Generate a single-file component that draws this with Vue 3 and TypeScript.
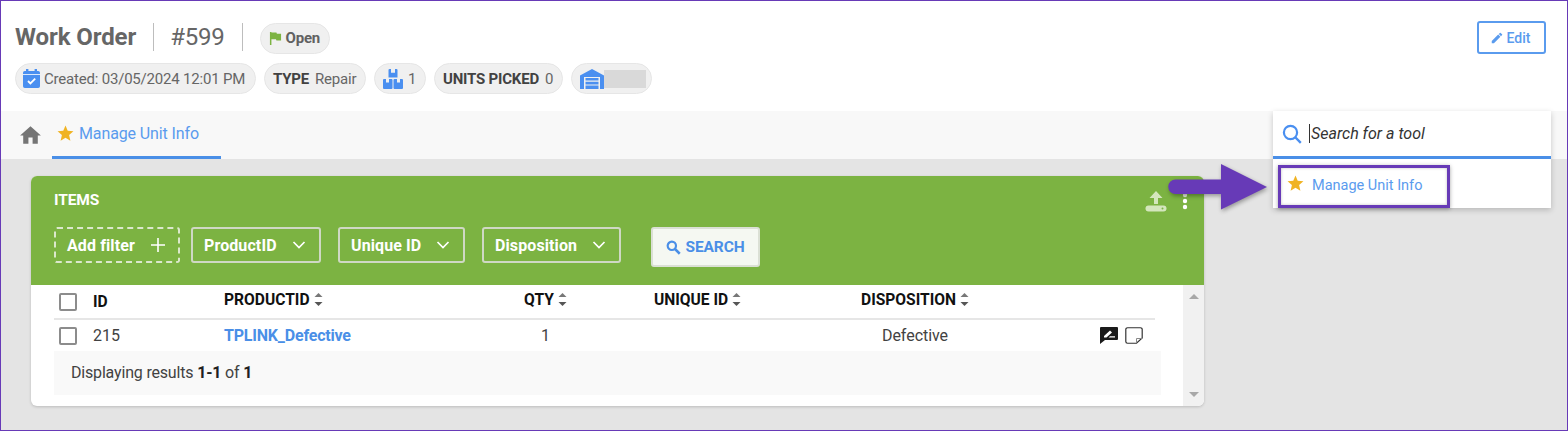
<script setup lang="ts">
const columns = [
  { label: 'PRODUCTID', cls: 'c-product' },
  { label: 'QTY', cls: 'c-qty' },
  { label: 'UNIQUE ID', cls: 'c-unique' },
  { label: 'DISPOSITION', cls: 'c-disp' },
]
const filters = [
  { label: 'ProductID', cls: 'f-product' },
  { label: 'Unique ID', cls: 'f-unique' },
  { label: 'Disposition', cls: 'f-disp' },
]
const starPath = 'M12 17.27 18.18 21l-1.64-7.03L22 9.24l-7.19-.61L12 2 9.19 8.63 2 9.24l5.46 4.73L5.82 21z'
</script>

<template>
  <div class="page">
    <header class="head">
      <div class="head-main">
        <div class="title-row">
          <h1 class="title">Work Order</h1>
          <span class="order-no">#599</span>
          <span class="chip status">
            <svg class="flag" viewBox="0 0 14 16" width="13" height="15"><path d="M1 1h1.600v14H1zM2.600 1.500H8l.5 1.300H13v7.400H8l-.5-1.300H2.600z" fill="#7cb342"/></svg>
            Open
          </span>
        </div>
        <div class="chip-row">
          <span class="chip c1">
            <svg viewBox="0 0 17 19" width="17" height="19"><path d="M3 0h2.400v2h6.200V0H14v2h1.200A1.800 1.800 0 0 1 17 3.800v13.400a1.800 1.800 0 0 1-1.800 1.800H1.800A1.800 1.800 0 0 1 0 17.200V3.800A1.800 1.800 0 0 1 1.800 2H3z" fill="#4a8ff0"/><path d="M0 5.200h17v.8H0z" fill="#fff"/><path d="m5 12 2.400 2.400L12.200 9.600" fill="none" stroke="#fff" stroke-width="1.800"/></svg>
            <span>Created: 03/05/2024 12:01 PM</span>
          </span>
          <span class="chip c2"><b>TYPE</b><span>Repair</span></span>
          <span class="chip c3">
            <svg viewBox="0 0 20 20" width="20" height="20"><path d="M5.500 1a1 1 0 0 1 1-1H8v3.800h4V0h1.500a1 1 0 0 1 1 1v7.500h-9zM0 11a1 1 0 0 1 1-1h2v3.500h3V10h2.500a1 1 0 0 1 1 1v8a1 1 0 0 1-1 1H1a1 1 0 0 1-1-1zM10.500 11a1 1 0 0 1 1-1H14v3.500h3V10h2a1 1 0 0 1 1 1v8a1 1 0 0 1-1 1h-7.500a1 1 0 0 1-1-1z" fill="#4a8ff0"/></svg>
            <span>1</span>
          </span>
          <span class="chip c4"><b>UNITS PICKED</b><span>0</span></span>
          <span class="chip c5">
            <svg viewBox="0 0 24 20" width="24" height="20"><path d="M0 6.500 12 0l12 6.500V20h-4V8H4v12H0z" fill="#4a8ff0"/><path d="M5.500 9h13v2.600h-13zM5.500 12.800h13v2.600h-13zM5.500 16.600h13V20h-13z" fill="#4a8ff0"/></svg>
            <span class="redacted"></span>
          </span>
        </div>
      </div>
      <button class="edit" type="button">
        <svg viewBox="0 0 24 24" width="14" height="14"><path d="M3 17.250V21h3.750L17.810 9.940l-3.750-3.750zM20.710 7.040a1 1 0 0 0 0-1.410l-2.340-2.340a1 1 0 0 0-1.410 0l-1.830 1.830 3.750 3.750z" fill="currentColor"/></svg>
        Edit
      </button>
    </header>

    <nav class="tabs">
      <svg class="home" viewBox="0 0 24 24" width="25" height="25"><path d="M10 20v-6h4v6h5v-8h3L12 3 2 12h3v8z" fill="#757575"/></svg>
      <a class="tab">
        <svg viewBox="0 0 24 24" width="19" height="19"><path :d="starPath" fill="#f0b323"/></svg>
        Manage Unit Info
      </a>
    </nav>

    <main class="content">
      <section class="card">
        <div class="card-head">
          <div class="card-title">ITEMS</div>
          <div class="filter-row">
            <button class="add-filter" type="button">
              Add filter
              <svg viewBox="0 0 16 16" width="16" height="16"><path d="M8 1v14M1 8h14" stroke="#fff" stroke-width="1.600" fill="none"/></svg>
            </button>
            <button v-for="f in filters" :key="f.label" class="filter" :class="f.cls" type="button">
              {{ f.label }}
              <svg viewBox="0 0 14 8" width="14" height="8"><path d="m1.500 1 5.500 5.500L12.500 1" stroke="#fff" stroke-width="1.700" fill="none"/></svg>
            </button>
            <button class="search" type="button">
              <svg viewBox="0 0 18 18" width="15" height="15"><circle cx="7" cy="7" r="5" fill="none" stroke="currentColor" stroke-width="2.600"/><path d="m10.500 10.500 6 6" stroke="currentColor" stroke-width="3"/></svg>
              SEARCH
            </button>
          </div>
          <div class="card-tools">
            <svg viewBox="0 0 24 24" width="24" height="24"><path d="M12 2 5.500 9H10v6h4V9h4.500z" fill="#d4e6bd"/><rect x="1.500" y="16.500" width="21" height="6" rx="3" fill="#d4e6bd"/><circle cx="18.500" cy="19.500" r="1" fill="#7cb342"/></svg>
            <svg viewBox="0 0 6 18" width="6" height="18"><circle cx="3" cy="3" r="2.200" fill="#e8f0dc"/><circle cx="3" cy="9" r="2.200" fill="#fff"/><circle cx="3" cy="15" r="2.200" fill="#fff"/></svg>
          </div>
        </div>

        <div class="card-body">
          <div class="table-wrap">
            <div class="grid-row head-row">
              <span class="check"></span>
              <span class="th th-id">ID</span>
              <span v-for="c in columns" :key="c.label" class="th" :class="c.cls">
                {{ c.label }}
                <svg viewBox="0 0 9 15" width="9" height="15"><path d="M4.500 1 8.500 5H.5z" fill="#777"/><path d="M.5 10h8l-4 4z" fill="#555"/></svg>
              </span>
              <span></span>
            </div>
            <div class="grid-row data-row">
              <span class="check"></span>
              <span>215</span>
              <a class="link">TPLINK_Defective</a>
              <span class="qty">1</span>
              <span></span>
              <span class="disp">Defective</span>
              <span class="actions">
                <svg viewBox="0 0 18 17" width="18" height="17"><path d="M1 0h16a1 1 0 0 1 1 1v11a1 1 0 0 1-1 1H5l-5 4V1a1 1 0 0 1 1-1z" fill="#1a1a1a"/><path d="M4 10.500v-1.500l6-5.500 2 2-5.500 5zM8.500 10.500l1.500-1.300H15v1.300z" fill="#fff"/></svg>
                <svg viewBox="0 0 18 17" width="18" height="17"><path d="M2.500.75h13a1.700 1.700 0 0 1 1.700 1.700V11L11.500 16.250h-9a1.700 1.700 0 0 1-1.700-1.700V2.450a1.700 1.700 0 0 1 1.700-1.700z" fill="none" stroke="#333" stroke-width="1.200"/><path d="M11.500 16V11.500H17" fill="none" stroke="#888" stroke-width="1"/></svg>
              </span>
            </div>
          </div>
          <div class="footer-bar">Displaying results <b>1-1</b> of <b>1</b></div>
          <div class="scrollbar">
            <i class="up"></i>
            <i class="down"></i>
          </div>
        </div>
      </section>
    </main>

    <aside class="tool-panel">
      <div class="tool-search">
        <svg viewBox="0 0 20 20" width="20" height="20"><circle cx="8.500" cy="8.500" r="6.600" fill="none" stroke="#4a8ff0" stroke-width="2.200"/><path d="m13 13 5.800 5.800" stroke="#4a8ff0" stroke-width="2.400"/></svg>
        <span class="caret"></span>
        <span class="placeholder">Search for a tool</span>
      </div>
      <div class="tool-item">
        <svg viewBox="0 0 24 24" width="19" height="19"><path :d="starPath" fill="#f0b323"/></svg>
        <span>Manage Unit Info</span>
      </div>
    </aside>
    <div class="highlight"></div>
    <svg class="arrow" viewBox="0 0 100 46" width="100" height="46">
      <path d="M7.500 15.500H53V0l46 23-46 22.500V30H7.500a7.250 7.250 0 0 1 0-14.500z" fill="#673ab7"/>
    </svg>
  </div>
</template>

<style>
html, body { margin: 0; padding: 0; background: #e4e4e4; }
</style>

<style scoped>
.page {
  position: relative;
  width: 1568px;
  height: 431px;
  box-sizing: border-box;
  border: 1px solid #673ab7;
  background: #e4e4e4;
  overflow: hidden;
  font-family: Roboto, "Liberation Sans", sans-serif;
  color: #424242;
}
.head {
  height: 110px;
  background: #fff;
  display: flex;
  justify-content: space-between;
  align-items: flex-start;
  padding: 20px 21px 0 14px;
  box-sizing: border-box;
}
.title-row { display: flex; align-items: center; height: 32px; }
.title {
  margin: 0;
  font-size: 24px;
  font-weight: 700;
  color: #666;
  letter-spacing: -0.1px;
  padding-right: 17px;
  border-right: 1px solid #bdbdbd;
  line-height: 28px;
}
.order-no {
  font-size: 24px;
  color: #666;
  letter-spacing: -0.2px;
  padding: 0 17px 0 16px;
  border-right: 1px solid #bdbdbd;
  line-height: 28px;
}
.chip {
  display: inline-flex;
  align-items: center;
  box-sizing: border-box;
  height: 31px;
  border-radius: 16px;
  background: #f0f0f0;
  border: 1px solid #e6e6e6;
  font-size: 15px;
  letter-spacing: -0.2px;
  color: #666;
  white-space: nowrap;
}
.chip b { color: #424242; font-weight: 700; }
.status {
  margin-left: 17px;
  margin-top: 2px;
  width: 70px;
  padding-left: 8px;
  gap: 4px;
  font-weight: 700;
  color: #616161;
}
.chip-row { display: flex; gap: 8px; margin-top: 10px; }
.c1 { width: 241px; padding-left: 7px; gap: 4px; }
.c2 { width: 102px; padding-left: 8px; gap: 6px; }
.c3 { width: 52px; padding-left: 8px; gap: 5px; }
.c4 { width: 129px; padding-left: 8px; gap: 6px; }
.c5 { width: 81px; padding-left: 8px; }
.redacted { width: 42px; height: 18px; background: #d9d9d9; }
.edit {
  width: 69px;
  height: 33px;
  display: flex;
  align-items: center;
  justify-content: center;
  gap: 3px;
  background: #fff;
  border: 2px solid #5a9bee;
  border-radius: 3px;
  color: #5a9bee;
  font: 500 14px Roboto, sans-serif;
  padding: 0 3px 0 0;
}
.tabs {
  height: 48px;
  background: #f8f8f8;
  display: flex;
  align-items: stretch;
  padding-left: 17px;
  box-sizing: border-box;
}
.home { align-self: center; }
.tab {
  margin-left: 9px;
  width: 169px;
  box-sizing: border-box;
  padding: 0 0 1px 4px;
  display: flex;
  align-items: center;
  gap: 4px;
  font-size: 16px;
  letter-spacing: -0.12px;
  color: #5a9bee;
  border-bottom: 3px solid #4a8fe7;
}
.content { padding: 17px 0 0 30px; }
.card {
  width: 1173px;
  height: 230px;
  background: #fff;
  border-radius: 6px;
  overflow: hidden;
  box-shadow: 0 1px 3px rgba(0, 0, 0, .18);
}
.card-head {
  position: relative;
  height: 109px;
  background: #7cb342;
  padding: 15px 0 0 23px;
  box-sizing: border-box;
  color: #fff;
}
.card-title { font-size: 15.5px; font-weight: 700; line-height: 18px; letter-spacing: -0.1px; }
.filter-row { display: flex; align-items: flex-start; margin-top: 18px; }
.filter-row button { font-family: Roboto, sans-serif; }
.add-filter, .filter {
  height: 36px;
  box-sizing: border-box;
  background: transparent;
  color: #fff;
  font-size: 16px;
  font-weight: 700;
  display: flex;
  align-items: center;
  justify-content: space-between;
  border-radius: 3px;
  letter-spacing: 0.1px;
}
.add-filter {
  width: 126px;
  border: 2px dashed #dbe8cc;
  padding: 0 12px 0 11px;
  margin-right: 11px;
}
.filter { border: 2px solid #cfd8c4; padding: 0 13px 0 11px; }
.f-product { width: 130px; margin-right: 17px; }
.f-unique { width: 127px; margin-right: 17px; }
.f-disp { width: 139px; margin-right: 30px; }
.search {
  width: 109px;
  height: 40px;
  box-sizing: border-box;
  background: #f5f8f2;
  border: 2px solid #dbe0d5;
  border-radius: 3px;
  color: #4a8fe7;
  font-size: 15.5px;
  font-weight: 700;
  display: flex;
  align-items: center;
  justify-content: center;
  gap: 4px;
  padding: 0;
  letter-spacing: -0.1px;
}
.card-tools {
  position: absolute;
  top: 13px;
  left: 1113px;
  display: flex;
  align-items: center;
  gap: 14px;
}
.card-body { position: relative; height: 121px; padding-left: 23px; }
.table-wrap { width: 1101px; }
.grid-row {
  display: grid;
  grid-template-columns: 39px 131px 300px 130px 207px 108px 1fr;
  align-items: center;
  font-size: 16px;
  color: #424242;
}
.head-row { height: 35px; border-bottom: 2px solid #e6e6e6; box-sizing: border-box; }
.data-row { height: 31px; box-sizing: border-box; }
.th {
  display: flex;
  align-items: center;
  gap: 4px;
  font-size: 15.6px;
  font-weight: 700;
  color: #111;
  margin-top: -4px;
}
.th-id { margin-top: 1px; }
.check {
  width: 18px;
  height: 18px;
  box-sizing: border-box;
  margin-left: 5px;
  margin-top: 1px;
  border: 2px solid #8c8c8c;
  border-radius: 2px;
  background: #fff;
}
.link { color: #4a8fe7; font-weight: 700; letter-spacing: -0.2px; }
.qty { padding-left: 17px; }
.disp { text-align: center; letter-spacing: -0.05px; }
.actions { display: flex; justify-content: flex-end; gap: 7px; padding-right: 12px; }
.footer-bar {
  width: 1107px;
  height: 44px;
  box-sizing: border-box;
  background: #f9f9f9;
  padding: 0 0 0 17px;
  font-size: 16px;
  letter-spacing: -0.18px;
  line-height: 44px;
  color: #424242;
}
.footer-bar b { color: #212121; font-weight: 700; }
.scrollbar {
  position: absolute;
  top: 0;
  right: 0;
  bottom: 0;
  width: 21px;
  background: #f1f1f1;
  display: flex;
  flex-direction: column;
  justify-content: space-between;
  align-items: center;
  padding: 9px 0;
  box-sizing: border-box;
}
.scrollbar i { width: 0; height: 0; border-left: 5px solid transparent; border-right: 5px solid transparent; }
.up { border-bottom: 5px solid #a8a8a8; }
.down { border-top: 5px solid #a8a8a8; }
.tool-panel {
  position: absolute;
  left: 1272px;
  top: 110px;
  width: 278px;
  height: 97px;
  background: #fff;
  box-shadow: 0 2px 6px rgba(0, 0, 0, .2);
}
.tool-search {
  height: 48px;
  box-sizing: border-box;
  border-bottom: 3px solid #4a8fe7;
  display: flex;
  align-items: center;
  padding: 0 0 0 9px;
  font-size: 16px;
}
.caret { width: 1px; height: 19px; background: #333; margin-left: 7px; }
.placeholder { font-style: italic; color: #333; margin-left: 1px; }
.tool-item {
  display: flex;
  align-items: center;
  height: 49px;
  padding: 0 0 0 13px;
  gap: 7px;
  font-size: 14.5px;
  color: #5a9bee;
}
.tool-item span { margin-top: 3px; }
.tool-item svg { margin-top: -1px; }
.highlight {
  position: absolute;
  left: 1277px;
  top: 164px;
  width: 172px;
  height: 43px;
  box-sizing: border-box;
  border: 3px solid #673ab7;
  box-shadow: 0 1px 4px rgba(0, 0, 0, .35), inset 0 0 3px rgba(0, 0, 0, .25);
}
.arrow {
  position: absolute;
  left: 1167px;
  top: 163px;
  filter: drop-shadow(1px 2px 2px rgba(0, 0, 0, .35));
}
</style>
